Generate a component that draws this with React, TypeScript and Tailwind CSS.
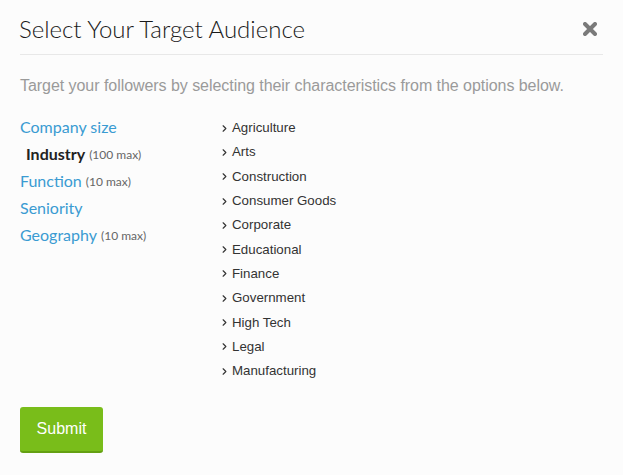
import { ChevronRight } from "lucide-react";

const categories = [
  { label: "Company size" },
  { label: "Industry", max: "(100 max)", active: true },
  { label: "Function", max: "(10 max)" },
  { label: "Seniority" },
  { label: "Geography", max: "(10 max)" },
];

const industries = [
  "Agriculture",
  "Arts",
  "Construction",
  "Consumer Goods",
  "Corporate",
  "Educational",
  "Finance",
  "Government",
  "High Tech",
  "Legal",
  "Manufacturing",
];

export default function App() {
  return (
    <main className="w-[623px] h-[475px] bg-[#fcfcfc] font-['Liberation_Sans',Arial,sans-serif] overflow-hidden">
      <header className="mx-[20px] flex items-center justify-between h-[55px] pt-[4px] border-b border-[#e8e8e8]">
        <h1 className="font-['Lato',sans-serif] font-light text-[24px] text-[#1a1a1a] -ml-[1px]">
          Select Your Target Audience
        </h1>
        <button className="mr-[6px] text-[#7a7a7a]" aria-label="Close">
          <svg width="14" height="14" viewBox="0 0 14 14">
            <path d="M2 2 L12 12 M12 2 L2 12" stroke="currentColor" strokeWidth="4" strokeLinecap="round" />
          </svg>
        </button>
      </header>

      <p className="mx-[20px] mt-[19px] text-[16px] text-[#9a9a9a] tracking-[-0.05px]">
        Target your followers by selecting their characteristics from the options below.
      </p>

      <section className="mx-[20px] mt-[15px] flex">
        <ul className="w-[200px] flex flex-col font-['Lato',sans-serif]">
          {categories.map((c) => (
            <li key={c.label} className={`h-[27px] flex items-center ${c.active ? "pl-[6px]" : ""}`}>
              <span className={`text-[16px] ${c.active ? "text-[#222] font-bold" : "text-[#3a9bd2]"}`}>
                {c.label}
              </span>
              {c.max && <span className="ml-[4px] text-[12px] text-[#666] mt-[2px]">{c.max}</span>}
            </li>
          ))}
        </ul>

        <ul className="flex flex-col mt-[3px]">
          {industries.map((item) => (
            <li key={item} className="h-[24.3px] flex items-center text-[13.3px] text-[#333]">
              <ChevronRight size={11} strokeWidth={2.5} className="text-[#333] -ml-[1px] mr-[2px]" />
              {item}
            </li>
          ))}
        </ul>
      </section>

      <button className="ml-[20px] mt-[24px] w-[83px] h-[46px] rounded-[3px] bg-[#79bd1a] border-b-2 border-[#64a012] text-white text-[16px]">
        Submit
      </button>
    </main>
  );
}
